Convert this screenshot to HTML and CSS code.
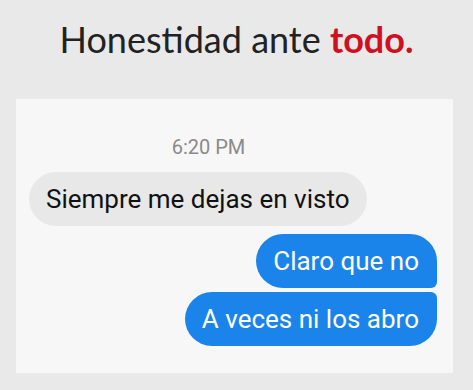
FILE: index.html
```html
<!DOCTYPE html>
<html lang="es">
  <head>
    <meta charset="UTF-8" />
    <meta name="viewport" content="width=device-width, initial-scale=1.0" />
    <title>Honestidad ante todo</title>
    <link rel="stylesheet" href="styles.css">
  </head>
  <body>
    <h1 class="title">Honestidad ante <strong>todo.</strong></h1>
    <div class="chat">
      <p class="time">6:20 PM</p>
      <ul class="msgs">
        <li class="in">Siempre me dejas en visto</li>
        <li class="out first">Claro que no</li>
        <li class="out last">A veces ni los abro</li>
      </ul>
    </div>
  </body>
</html>
```

FILE: styles.css
```css
* {
  margin: 0;
  padding: 0;
  box-sizing: border-box;
}
ul {
  list-style: none;
}
body {
  background: #e9e9e9;
  width: 473px;
  height: 390px;
  overflow: hidden;
}
.title {
  font-family: Lato, "Open Sans", sans-serif;
  font-weight: 400;
  font-size: 36px;
  line-height: 40px;
  color: #222;
  text-align: center;
  padding-top: 19px;
  height: 99px;
}
.title strong {
  color: #d0101e;
  font-weight: 700;
}
.chat {
  margin-left: 16px;
  width: 437px;
  height: 274px;
  background: #f7f7f7;
  font-family: Roboto, "Liberation Sans", sans-serif;
}
.time {
  padding: 37px 52px 0 0;
  text-align: center;
  font-size: 20px;
  line-height: 22px;
  color: #8a8a8a;
}
.msgs {
  display: flex;
  flex-direction: column;
  padding: 14px 16px 0 13px;
}
.msgs li {
  font-size: 26px;
  line-height: 54px;
  padding: 0 18px 0 17px;
  border-radius: 27px;
}
.in {
  align-self: flex-start;
  background: #e8e8e8;
  color: #111;
  margin-bottom: 8px;
}
.out {
  align-self: flex-end;
  background: #1b84ea;
  color: #fff;
}
.out.first {
  border-bottom-right-radius: 6px;
  margin-bottom: 4px;
}
.out.last {
  border-top-right-radius: 6px;
}
```
